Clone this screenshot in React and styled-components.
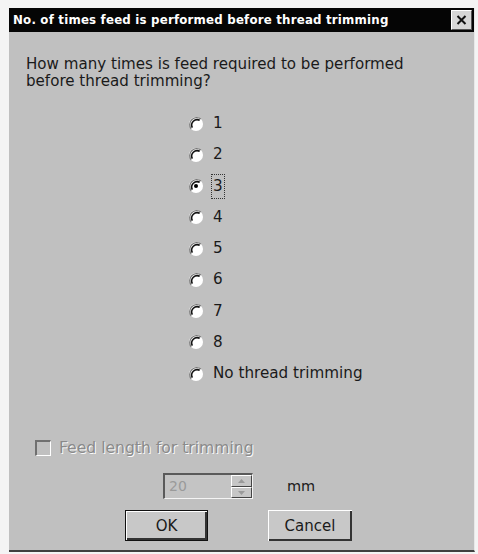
import React from "react";
import styled, { createGlobalStyle } from "styled-components";

const Global = createGlobalStyle`
  html, body { margin: 0; padding: 0; background: #f4f4f4; }
  body { width: 478px; height: 554px; overflow: hidden; }
`;

const Dialog = styled.div`
  margin: 8px 0 0 9px;
  width: 466px;
  height: 544px;
  box-sizing: border-box;
  background: #c0c0c0;
  border-right: 1px solid #e8e8e8;
  border-bottom: 2px solid #404040;
  display: flex;
  flex-direction: column;
  font-family: "DejaVu Sans", "Liberation Sans", sans-serif;
  color: #1a1a1a;
`;

const TitleBar = styled.div`
  height: 24px;
  background: #050505;
  display: flex;
  align-items: center;
  justify-content: space-between;
  padding: 0 2px 0 4px;
`;

const Title = styled.span`
  color: #fff;
  font-family: "DejaVu Sans", sans-serif;
  font-weight: bold;
  font-size: 11.8px;
  letter-spacing: 0.2px;
`;

const CloseButton = styled.div`
  width: 21px;
  height: 20px;
  box-sizing: border-box;
  background: #d6d6d6;
  border-top: 1px solid #fff;
  border-left: 1px solid #fff;
  border-right: 1px solid #555;
  border-bottom: 1px solid #555;
  display: flex;
  align-items: center;
  justify-content: center;
`;

const Body = styled.div`
  display: flex;
  flex-direction: column;
  padding: 24px 0 0 17px;
`;

const Question = styled.p`
  margin: 0;
  font-size: 15.1px;
  line-height: 17px;
`;

const RadioGroup = styled.div`
  display: flex;
  flex-direction: column;
  margin-top: 18px;
  padding-left: 162px;
`;

const RadioRow = styled.label`
  height: 31.25px;
  display: flex;
  align-items: center;
  gap: 8px;
  font-size: 15.2px;
`;

const RadioLabel = styled.span`
  padding: 3px 1px;
  outline: ${(p) => (p.$focused ? "1px dotted #333" : "none")};
  line-height: 17px;
`;

const CheckRow = styled.div`
  display: flex;
  align-items: center;
  gap: 8px;
  margin-top: 50px;
  padding-left: 9px;
`;

const CheckBox = styled.div`
  width: 16px;
  height: 16px;
  box-sizing: border-box;
  background: #c0c0c0;
  border-top: 2px solid #707070;
  border-left: 2px solid #707070;
  border-right: 1px solid #fff;
  border-bottom: 1px solid #fff;
`;

const DisabledText = styled.span`
  font-size: 15.6px;
  color: #8a8a8a;
  text-shadow: 1px 1px 0 #fafafa;
`;

const SpinRow = styled.div`
  display: flex;
  align-items: center;
  margin-top: 16px;
  padding-left: 137px;
  gap: 34px;
`;

const SpinBox = styled.div`
  width: 90px;
  height: 26px;
  box-sizing: border-box;
  display: flex;
  background: #c4c4c4;
  border-top: 2px solid #5a5a5a;
  border-left: 2px solid #5a5a5a;
  border-right: 1px solid #f4f4f4;
  border-bottom: 1px solid #f4f4f4;
`;

const SpinValue = styled.span`
  flex: 1;
  font-size: 14px;
  color: #9a9a9a;
  padding-left: 4px;
  line-height: 22px;
`;

const SpinButtons = styled.div`
  width: 21px;
  display: flex;
  flex-direction: column;
`;

const SpinButton = styled.div`
  flex: 1;
  box-sizing: border-box;
  background: #c6c6c6;
  border-top: 1px solid #fff;
  border-left: 1px solid #fff;
  border-right: 1px solid #444;
  border-bottom: 1px solid #444;
  display: flex;
  align-items: center;
  justify-content: center;
`;

const Unit = styled.span`
  font-size: 14.5px;
`;

const ButtonRow = styled.div`
  display: flex;
  margin-top: 11px;
  padding-left: 99px;
  gap: 60px;
`;

const Button = styled.div`
  width: ${(p) => p.$w}px;
  height: 31px;
  box-sizing: border-box;
  background: #c8c8c8;
  border: ${(p) => (p.$default ? "1px solid #111" : "none")};
  box-shadow: inset 1px 1px 0 #fff, inset -2px -2px 0 #333;
  display: flex;
  align-items: center;
  justify-content: center;
  font-size: 15px;
`;

function Radio({ checked }) {
  return (
    <svg width="16" height="16" viewBox="0 0 16 16">
      <circle cx="8" cy="8" r="7" fill="#fff" />
      <path d="M12.9 3.1 A7 7 0 0 0 3.1 12.9" fill="none" stroke="#7a7a7a" strokeWidth="1.3" />
      <path d="M11.7 4.3 A5.5 5.5 0 0 0 4.3 11.7" fill="none" stroke="#111" strokeWidth="1.6" />
      {checked && <circle cx="8" cy="8" r="2" fill="#000" />}
    </svg>
  );
}

const options = ["1", "2", "3", "4", "5", "6", "7", "8", "No thread trimming"];

export default function App() {
  return (
    <>
      <Global />
      <Dialog>
        <TitleBar>
          <Title>No. of times feed is performed before thread trimming</Title>
          <CloseButton>
            <svg width="11" height="10" viewBox="0 0 11 10">
              <path d="M1.5 1 L9.5 9 M9.5 1 L1.5 9" stroke="#111" strokeWidth="2" />
            </svg>
          </CloseButton>
        </TitleBar>
        <Body>
          <Question>
            How many times is feed required to be performed
            <br />
            before thread trimming?
          </Question>
          <RadioGroup>
            {options.map((o) => (
              <RadioRow key={o}>
                <Radio checked={o === "3"} />
                <RadioLabel $focused={o === "3"}>{o}</RadioLabel>
              </RadioRow>
            ))}
          </RadioGroup>
          <CheckRow>
            <CheckBox />
            <DisabledText>Feed length for trimming</DisabledText>
          </CheckRow>
          <SpinRow>
            <SpinBox>
              <SpinValue>20</SpinValue>
              <SpinButtons>
                <SpinButton>
                  <svg width="7" height="4" viewBox="0 0 7 4">
                    <path d="M0 4 L3.5 0 L7 4 Z" fill="#9a9a9a" />
                  </svg>
                </SpinButton>
                <SpinButton>
                  <svg width="7" height="4" viewBox="0 0 7 4">
                    <path d="M0 0 L3.5 4 L7 0 Z" fill="#9a9a9a" />
                  </svg>
                </SpinButton>
              </SpinButtons>
            </SpinBox>
            <Unit>mm</Unit>
          </SpinRow>
          <ButtonRow>
            <Button $w={83} $default>OK</Button>
            <Button $w={84}>Cancel</Button>
          </ButtonRow>
        </Body>
      </Dialog>
    </>
  );
}
